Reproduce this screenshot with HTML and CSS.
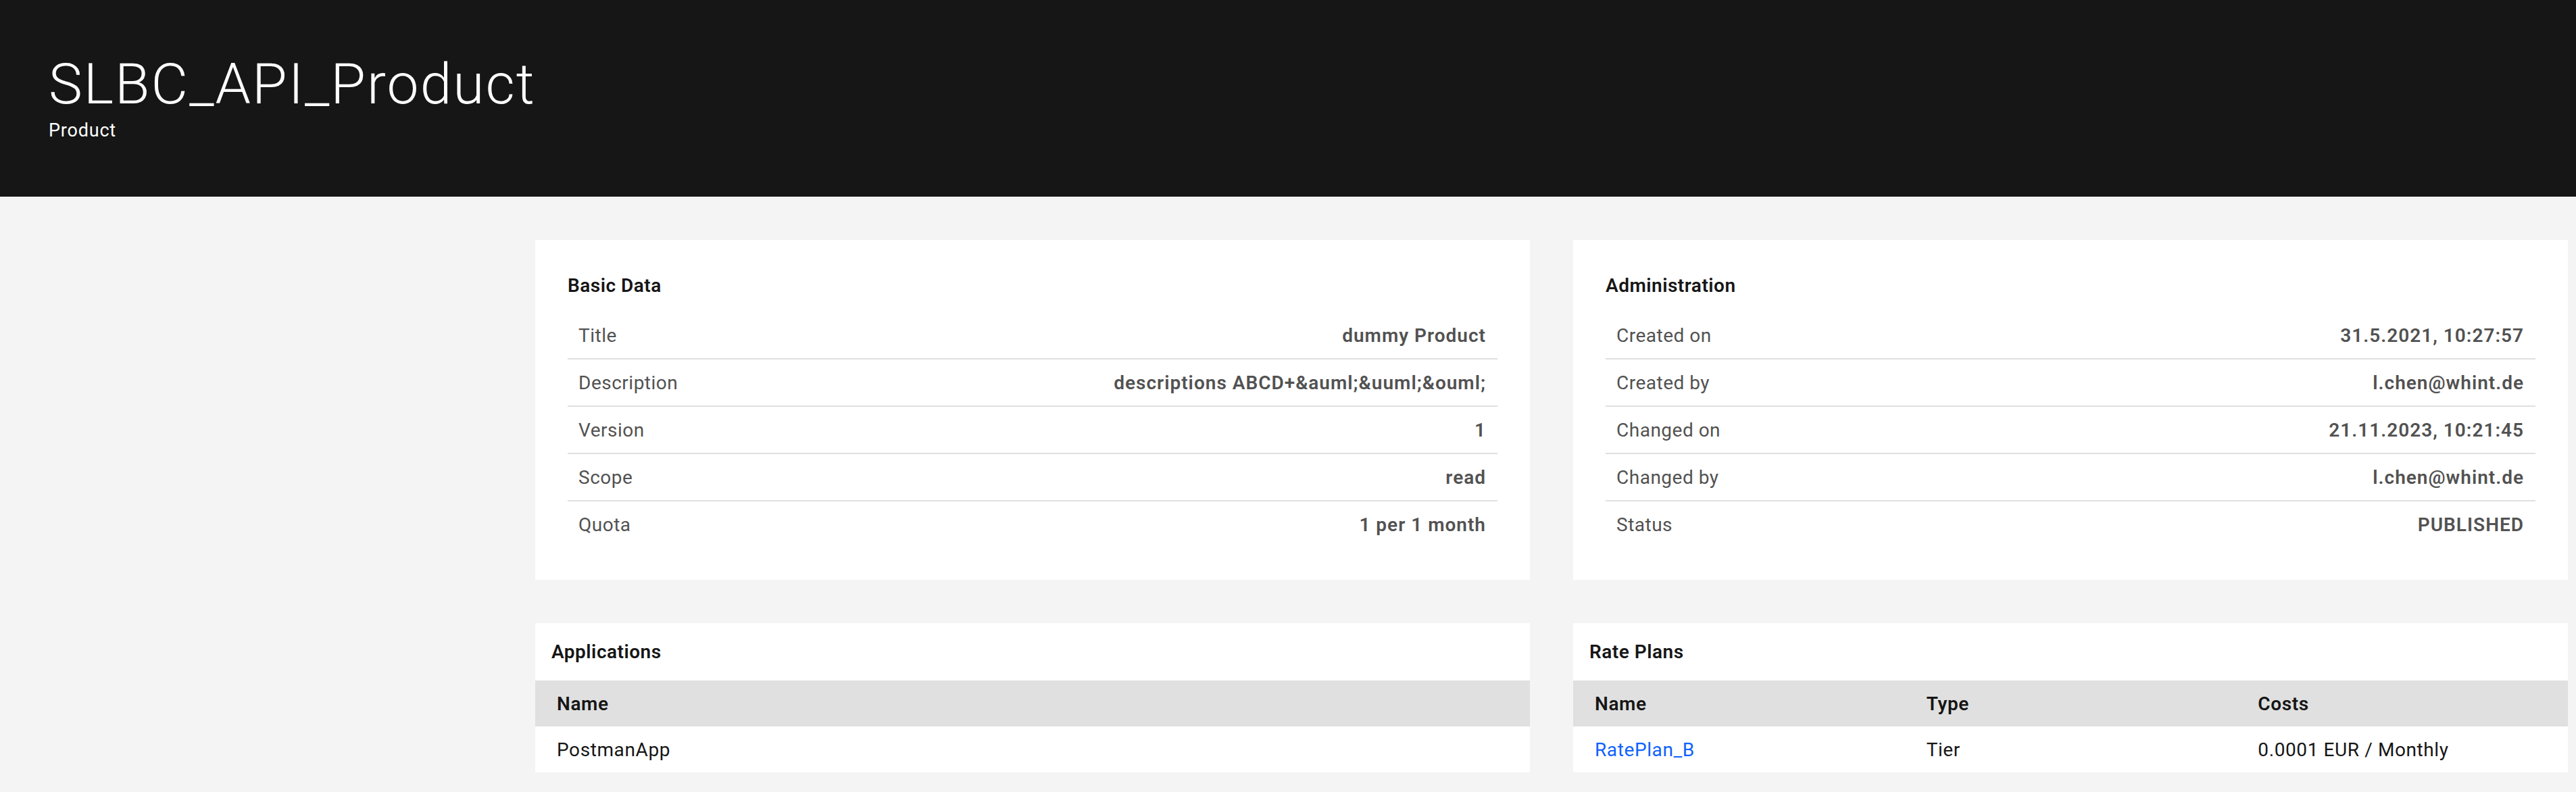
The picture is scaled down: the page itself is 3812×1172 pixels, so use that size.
FILE: index.html
```html
<!DOCTYPE html>
<html lang="en">
  <head>
    <meta charset="utf-8" />
    <meta name="viewport" content="width=device-width, initial-scale=1" />
    <title>SLBC_API_Product</title>
    <link rel="stylesheet" href="styles.css">
  </head>
  <body>
    <header class="page-header">
      <h1 class="page-title">SLBC_API_Product</h1>
      <div class="page-subtitle">Product</div>
    </header>
    <main class="content">
      <section class="card">
        <h2 class="card-title">Basic Data</h2>
        <div class="list">
          <div class="list-row"><span class="list-label">Title</span><span class="list-value">dummy Product</span></div>
          <div class="list-row"><span class="list-label">Description</span><span class="list-value">descriptions ABCD+&amp;auml;&amp;uuml;&amp;ouml;</span></div>
          <div class="list-row"><span class="list-label">Version</span><span class="list-value">1</span></div>
          <div class="list-row"><span class="list-label">Scope</span><span class="list-value">read</span></div>
          <div class="list-row"><span class="list-label">Quota</span><span class="list-value">1 per 1 month</span></div>
        </div>
      </section>
      <section class="card">
        <h2 class="card-title">Administration</h2>
        <div class="list">
          <div class="list-row"><span class="list-label">Created on</span><span class="list-value">31.5.2021, 10:27:57</span></div>
          <div class="list-row"><span class="list-label">Created by</span><span class="list-value">l.chen@whint.de</span></div>
          <div class="list-row"><span class="list-label">Changed on</span><span class="list-value">21.11.2023, 10:21:45</span></div>
          <div class="list-row"><span class="list-label">Changed by</span><span class="list-value">l.chen@whint.de</span></div>
          <div class="list-row"><span class="list-label">Status</span><span class="list-value">PUBLISHED</span></div>
        </div>
      </section>
      <section class="table-card">
        <h2 class="table-title">Applications</h2>
        <table class="data-table">
          <thead>
            <tr><th>Name</th></tr>
          </thead>
          <tbody>
            <tr><td>PostmanApp</td></tr>
          </tbody>
        </table>
      </section>
      <section class="table-card">
        <h2 class="table-title">Rate Plans</h2>
        <table class="data-table">
          <thead>
            <tr><th>Name</th><th>Type</th><th>Costs</th></tr>
          </thead>
          <tbody>
            <tr><td><a href="#" class="link">RatePlan_B</a></td><td>Tier</td><td>0.0001 EUR / Monthly</td></tr>
          </tbody>
        </table>
      </section>
    </main>
  </body>
</html>
```

FILE: styles.css
```css
body {
  margin: 0;
  background-color: #f4f4f4;
  font-family: Roboto, "Liberation Sans", sans-serif;
  color: #161616;
}
.page-header {
  box-sizing: border-box;
  height: 291px;
  padding: 75px 0 0 72px;
  background-color: #161616;
  color: #ffffff;
}
.page-title {
  margin: 0;
  font-size: 84px;
  font-weight: 300;
  line-height: 100px;
  letter-spacing: 2px;
}
.page-subtitle {
  font-size: 27px;
  line-height: 36px;
  letter-spacing: 0.8px;
}
.content {
  display: grid;
  grid-template-columns: 1472px 1472px;
  gap: 64px;
  padding: 64px 12px 64px 792px;
  align-items: start;
}
.card {
  background-color: #ffffff;
  padding: 48px;
}
.card-title {
  margin: 0 0 20px;
  font-size: 28px;
  font-weight: 600;
  line-height: 39px;
  letter-spacing: 0.5px;
}
.list-row {
  display: flex;
  justify-content: space-between;
  align-items: center;
  height: 68px;
  padding: 0 17px 0 16px;
  border-bottom: 2px solid #e0e0e0;
  font-size: 28px;
  color: #525252;
  letter-spacing: 0.5px;
}
.list-row:last-child {
  border-bottom: none;
}
.list-value {
  font-weight: 600;
  letter-spacing: 1px;
}
.table-card {
  background-color: #ffffff;
}
.table-title {
  margin: 0;
  padding: 25px 24px 24px;
  font-size: 28px;
  font-weight: 600;
  line-height: 36px;
  letter-spacing: 0.5px;
}
.data-table {
  width: 100%;
  border-collapse: collapse;
  table-layout: fixed;
  font-size: 28px;
  letter-spacing: 0.6px;
}
.data-table th {
  height: 68px;
  padding: 0 32px;
  background-color: #e0e0e0;
  text-align: left;
  font-weight: 600;
}
.data-table td {
  height: 68px;
  padding: 0 32px;
}
.link {
  color: #0f62fe;
  text-decoration: none;
}
```
